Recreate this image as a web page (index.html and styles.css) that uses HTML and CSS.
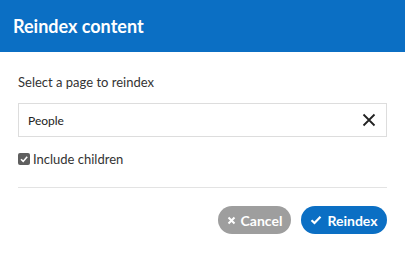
FILE: index.html
```html
<!DOCTYPE html>
<html>
<head>
<meta charset="utf-8">
<link rel="stylesheet" href="styles.css">
</head>
<body>
<div class="dialog">
  <header class="head"><h1 class="title">Reindex content</h1></header>
  <main class="body">
    <p class="label">Select a page to reindex</p>
    <div class="input">
      <span class="value">People</span>
      <svg class="clear" width="14" height="14" viewBox="0 0 14 14"><path d="M1.5 1.5 L12.5 12.5 M12.5 1.5 L1.5 12.5" stroke="#222" stroke-width="1.8" fill="none"/></svg>
    </div>
    <label class="check">
      <span class="box"><svg width="10" height="10" viewBox="0 0 10 10"><path d="M2 5.2 L4.2 7.4 L8.2 2.8" stroke="#fff" stroke-width="1.6" fill="none"/></svg></span>
      <span>Include children</span>
    </label>
    <hr class="sep">
    <div class="actions">
      <button class="btn cancel"><svg class="ic" width="9" height="9" viewBox="0 0 9 9"><path d="M1.5 1.5 L7.5 7.5 M7.5 1.5 L1.5 7.5" stroke="#fff" stroke-width="2" fill="none"/></svg>Cancel</button>
      <button class="btn ok"><svg class="ic" width="12" height="10" viewBox="0 0 12 10"><path d="M1.5 5.2 L4.5 8 L10.5 1.8" stroke="#fff" stroke-width="2.2" fill="none"/></svg>Reindex</button>
    </div>
  </main>
</div>
</body>
</html>
```
FILE: styles.css
```css
* { box-sizing: border-box; }
html, body { margin: 0; padding: 0; background: #fff; }
body { font-family: "Lato", "Noto Sans", sans-serif; color: #333; }
.dialog { width: 405px; height: 253px; }
.head { background: #0b6fc4; height: 52px; display: flex; align-items: center; padding: 0 13px; }
.title { margin: 0; color: #fff; font-size: 18px; font-weight: 700; }
.body { padding: 0 18px 0 18px; }
.label { margin: 0; padding-top: 20px; font-size: 13px; line-height: 20px; color: #333; }
.input { margin-top: 11px; height: 34px; border: 1px solid #ddd; display: flex; align-items: center; justify-content: space-between; padding: 0 10px 0 9px; }
.value { font-size: 12px; color: #222; }
.clear { display: block; }
.check { display: flex; align-items: center; margin-top: 13px; font-size: 13px; height: 18px; gap: 3px; color: #333; }
.box { width: 12px; height: 12px; background: #5f5f5f; border-radius: 2px; display: flex; align-items: center; justify-content: center; flex-shrink: 0; }
.sep { border: 0; border-top: 1px solid #e3e3e3; margin: 19px 0 0 0; }
.actions { display: flex; justify-content: flex-end; gap: 10px; margin-top: 18px; }
.btn { height: 28px; border: 0; border-radius: 14px; color: #fff; font-family: inherit; font-weight: 700; font-size: 14px; display: flex; align-items: center; justify-content: center; gap: 5px; padding: 0; }
.ic { flex-shrink: 0; display: block; }
.cancel { background: #9e9e9e; width: 73px; }
.ok { background: #0b6fc4; width: 86px; }
```
